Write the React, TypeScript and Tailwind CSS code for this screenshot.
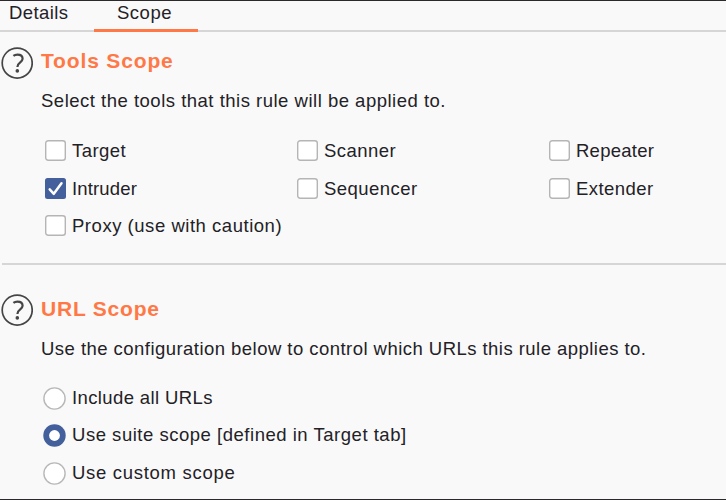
import type { ReactNode } from "react";

function HelpIcon() {
  return (
    <svg className="mt-[1px] h-8 w-8 shrink-0" viewBox="0 0 32 32" fill="none" stroke="#454545">
      <circle cx="16.2" cy="16.1" r="15" strokeWidth="1.7" />
      <path d="M12.4 8.9C13.5 8 14.9 7.6 16.4 7.6C19.6 7.6 21.6 9.1 21.6 11.7C21.6 15.5 16.4 15.3 16.4 20" strokeWidth="2.2" />
      <circle cx="16.3" cy="23.9" r="1.8" fill="#454545" stroke="none" />
    </svg>
  );
}

function Checkbox({ label, checked = false, spacing = "tracking-[0.45px]" }: { label: string; checked?: boolean; spacing?: string }) {
  return (
    <label className="flex h-[37.5px] items-start">
      {checked ? (
        <svg className="h-[21px] w-[21px] shrink-0" viewBox="0 0 21 21">
          <rect width="21" height="21" rx="2.5" fill="#43609c" />
          <path d="M4.7 11.4L8.8 15.8L16.5 5.2" fill="none" stroke="#fff" strokeWidth="2.5" strokeLinecap="round" strokeLinejoin="round" />
        </svg>
      ) : (
        <svg className="h-[21px] w-[21px] shrink-0" viewBox="0 0 21 21">
          <rect x="0.7" y="0.7" width="19.6" height="19.6" rx="2.5" fill="#fff" stroke="#b5b5b5" strokeWidth="1.4" />
        </svg>
      )}
      <span className={`ml-1.5 whitespace-nowrap leading-[22px] ${spacing}`}>{label}</span>
    </label>
  );
}

function Radio({ label, checked = false, spacing }: { label: string; checked?: boolean; spacing: string }) {
  return (
    <label className="flex h-[37.5px] items-start">
      <svg className="h-[23px] w-[23px] shrink-0" viewBox="0 0 23 23">
        {checked ? (
          <>
            <circle cx="11.5" cy="11.5" r="11.2" fill="#43609c" />
            <circle cx="11.5" cy="11.5" r="5.4" fill="#fff" />
          </>
        ) : (
          <circle cx="11.5" cy="11.5" r="10.6" fill="#fff" stroke="#b8b8b8" strokeWidth="1.4" />
        )}
      </svg>
      <span className={`ml-1.5 whitespace-nowrap leading-[22px] ${spacing}`}>{label}</span>
    </label>
  );
}

function Section({ title, titleClass, children }: { title: string; titleClass: string; children: ReactNode }) {
  return (
    <section className="flex pl-[1px]">
      <HelpIcon />
      <div className="min-w-0 flex-1 pl-2">
        <h2 className={`h-[39px] text-[21px] font-bold text-[#ff7846] ${titleClass}`}>{title}</h2>
        {children}
      </div>
    </section>
  );
}

export default function App() {
  return (
    <main className="flex h-[500px] w-[726px] flex-col overflow-hidden border-y border-[#2b292c] bg-[#f9f9f9] font-['Liberation_Sans',Arial,sans-serif] text-[18.5px] text-[#232126]">
      <nav className="flex h-[31px] shrink-0 border-b-2 border-[#d6d6d6] leading-[24px]">
        <div className="w-[94px] pl-[9px] tracking-[0.4px]">Details</div>
        <div className="h-[31px] w-[104px] border-b-3 border-[#ff7846] pl-[23px] tracking-[0.5px]">Scope</div>
      </nav>
      <div className="h-[232px] pt-[14px]">
        <Section title="Tools Scope" titleClass="leading-[30px] tracking-[0.85px]">
          <p className="h-[55px] whitespace-nowrap leading-[32px] tracking-[0.5px]">Select the tools that this rule will be applied to.</p>
          <div className="grid grid-cols-[252px_252px_1fr] pl-1">
            <Checkbox label="Target" />
            <Checkbox label="Scanner" />
            <Checkbox label="Repeater" spacing="tracking-[0.25px]" />
            <Checkbox label="Intruder" checked spacing="tracking-[0.15px]" />
            <Checkbox label="Sequencer" />
            <Checkbox label="Extender" />
            <Checkbox label="Proxy (use with caution)" spacing="tracking-[0.53px]" />
          </div>
        </Section>
      </div>
      <div className="ml-0.5 h-0.5 shrink-0 bg-[#d6d6d6]" />
      <div className="pt-[28px]">
        <Section title="URL Scope" titleClass="leading-[32px] tracking-[0.8px]">
          <p className="h-[55px] whitespace-nowrap leading-[34px] tracking-[0.46px]">Use the configuration below to control which URLs this rule applies to.</p>
          <div className="pl-[2px]">
            <Radio label="Include all URLs" spacing="tracking-[0.38px]" />
            <Radio label="Use suite scope [defined in Target tab]" checked spacing="tracking-[0.52px]" />
            <Radio label="Use custom scope" spacing="tracking-[0.7px]" />
          </div>
        </Section>
      </div>
    </main>
  );
}
